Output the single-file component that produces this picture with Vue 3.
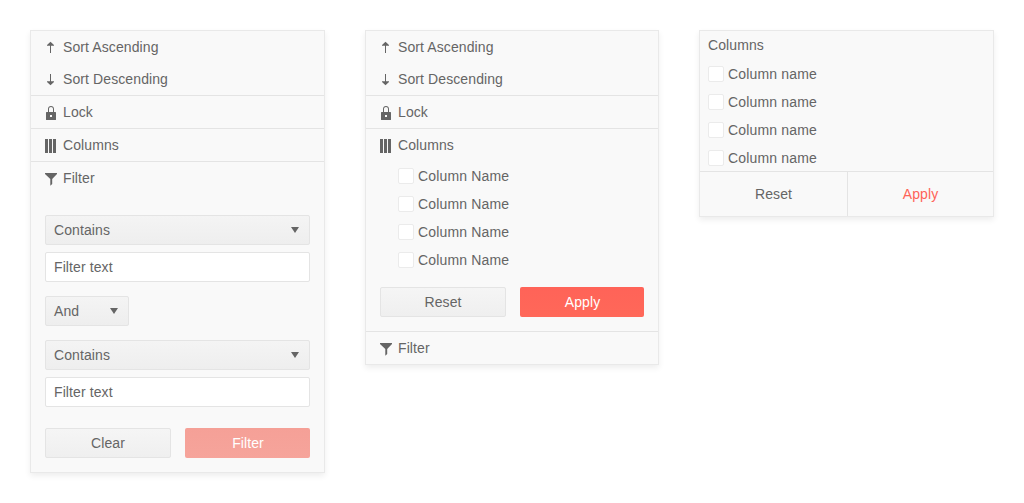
<script setup>
const names = ['Column Name', 'Column Name', 'Column Name', 'Column Name']
const shortNames = ['Column name', 'Column name', 'Column name', 'Column name']
const paths = {
  up: 'M6 13V5.7H3V5L6.5 1.7L10 5V5.7H7V13Z',
  down: 'M6 2V9.3H3V10L6.5 13.3L10 10V9.3H7V2Z',
  lock: 'M4 7V4C4 2.2 5.2 1 7 1S10 2.2 10 4V7H11.4Q12 7 12 7.6V14.4Q12 15 11.4 15H2.6Q2 15 2 14.4V7.6Q2 7 2.6 7ZM5 7H9V4C9 2.8 8.2 2 7 2S5 2.8 5 4ZM6 10V12H8V10Z',
  columns: 'M1 1H4V15H1ZM5 1H8V15H5ZM9 1H12V15H9Z',
  filter: 'M1 2H13V3L8.2 8V13L6.3 14.7V8L1 3Z'
}
const sortItems = [
  { icon: 'up', text: 'Sort Ascending' },
  { icon: 'down', text: 'Sort Descending' },
  { icon: 'lock', text: 'Lock', line: true },
  { icon: 'columns', text: 'Columns', line: true }
]
const filterItem = { icon: 'filter', text: 'Filter', line: true }
const firstMenu = [...sortItems, filterItem]
</script>

<template>
  <main class="stage">
    <section class="panel first">
      <div v-for="item in firstMenu" :key="item.text" class="item" :class="{ line: item.line }">
        <svg class="icon" viewBox="0 0 16 16"><path fill-rule="evenodd" :d="paths[item.icon]" /></svg>
        <span>{{ item.text }}</span>
      </div>
      <div class="form">
        <div class="field select"><span>Contains</span><svg class="caret" viewBox="0 0 8 6"><path d="M0 0H8L4 6Z" /></svg></div>
        <div class="field input">Filter text</div>
        <div class="field select logic"><span>And</span><svg class="caret" viewBox="0 0 8 6"><path d="M0 0H8L4 6Z" /></svg></div>
        <div class="field select"><span>Contains</span><svg class="caret" viewBox="0 0 8 6"><path d="M0 0H8L4 6Z" /></svg></div>
        <div class="field input">Filter text</div>
        <div class="actions">
          <button class="button">Clear</button>
          <button class="button primary muted">Filter</button>
        </div>
      </div>
    </section>

    <section class="panel second">
      <div v-for="item in sortItems" :key="item.text" class="item" :class="{ line: item.line }">
        <svg class="icon" viewBox="0 0 16 16"><path fill-rule="evenodd" :d="paths[item.icon]" /></svg>
        <span>{{ item.text }}</span>
      </div>
      <div class="checks nested">
        <label v-for="(name, i) in names" :key="i" class="check"><i class="box"></i>{{ name }}</label>
      </div>
      <div class="actions inset">
        <button class="button">Reset</button>
        <button class="button primary">Apply</button>
      </div>
      <div class="item line">
        <svg class="icon" viewBox="0 0 16 16"><path :d="paths.filter" /></svg>
        <span>Filter</span>
      </div>
    </section>

    <section class="panel third">
      <div class="title">Columns</div>
      <div class="checks">
        <label v-for="(name, i) in shortNames" :key="i" class="check"><i class="box"></i>{{ name }}</label>
      </div>
      <div class="footer">
        <button class="flat">Reset</button>
        <button class="flat accent">Apply</button>
      </div>
    </section>
  </main>
</template>

<style>
body {
  background: #fff;
}
</style>

<style scoped>
.stage {
  box-sizing: border-box;
  width: 1024px;
  height: 503px;
  padding: 30px;
  display: flex;
  align-items: flex-start;
  gap: 40px;
  font: 14px/20px "Liberation Sans", Arial, sans-serif;
  letter-spacing: 0.1px;
  color: #656565;
}
.stage *, .panel { box-sizing: border-box; }
.panel {
  flex: none;
  background: #f9f9f9;
  border: 1px solid #e9e9e9;
  box-shadow: 0 3px 6px rgba(0, 0, 0, 0.07);
}
.first { width: 295px; }
.second { width: 294px; }
.third { width: 295px; }
.item {
  display: flex;
  align-items: center;
  height: 32px;
  padding-left: 13px;
}
.item.line {
  height: 33px;
  border-top: 1px solid #e4e4e4;
}
.icon {
  width: 16px;
  height: 16px;
  margin: 2px 3px 0 0;
  fill: #656565;
}
.form {
  padding: 21px 14px 14px;
}
.field {
  display: flex;
  align-items: center;
  justify-content: space-between;
  height: 30px;
  padding: 0 10px 0 8px;
  border: 1px solid #e4e4e4;
  border-radius: 2px;
  background: #fff;
}
.field.select { background: linear-gradient(#f4f4f4, #eeeeee); }
.field.input { margin-top: 7px; }
.field.logic {
  width: 84px;
  margin: 14px 0;
}
.caret {
  width: 8px;
  height: 6px;
  fill: #656565;
}
.actions {
  display: grid;
  grid-template-columns: 126px 1fr;
  gap: 14px;
}
.form .actions { margin-top: 21px; }
.inset { padding: 13px 14px 14px; }
.button {
  height: 30px;
  padding: 0;
  border: 1px solid #e4e4e4;
  border-radius: 2px;
  background: linear-gradient(#f5f5f5, #efefef);
  font: inherit;
  letter-spacing: inherit;
  color: #656565;
}
.button.primary {
  border: 0;
  padding-left: 1px;
  background: linear-gradient(#ff6358, #ff6859);
  color: #fff;
}
.button.muted {
  background: linear-gradient(#f5a097, #f6a49b);
}
.check {
  display: flex;
  align-items: center;
  height: 28px;
  letter-spacing: 0.16px;
}
.box {
  width: 16px;
  height: 16px;
  margin-right: 4px;
  border: 1px solid #ebebeb;
  border-radius: 2px;
  background: #fff;
}
.nested { padding: 1px 0 0 32px; }
.title {
  height: 29px;
  padding: 4px 8px 0;
}
.third .checks {
  height: 111px;
  padding-left: 8px;
}
.footer {
  display: grid;
  grid-template-columns: 147px 1fr;
  height: 45px;
  border-top: 1px solid #e4e4e4;
}
.flat {
  padding: 0;
  border: 0;
  background: none;
  font: inherit;
  letter-spacing: inherit;
  color: #656565;
}
.flat.accent {
  border-left: 1px solid #e4e4e4;
  color: #ff6358;
}
</style>
